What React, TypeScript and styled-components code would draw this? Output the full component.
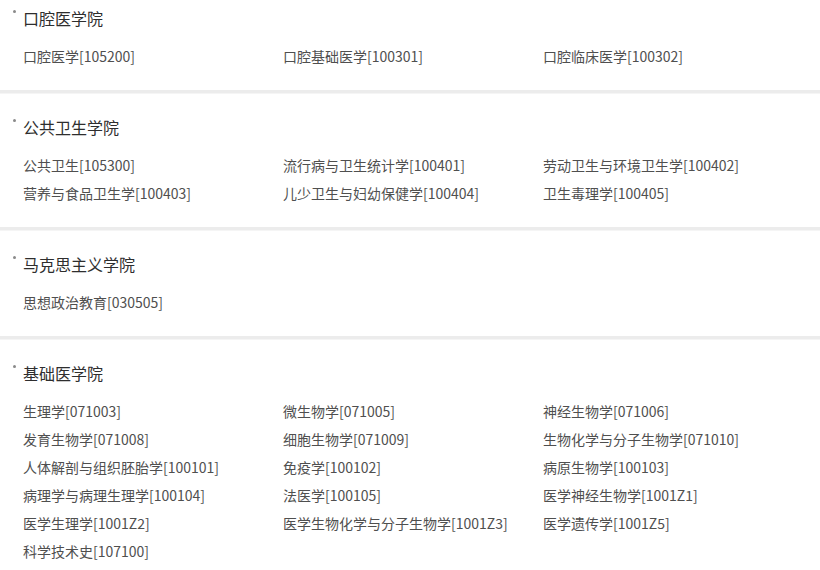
import React from 'react';
import styled, { createGlobalStyle } from 'styled-components';

const GlobalStyle = createGlobalStyle`
  html, body {
    margin: 0;
    padding: 0;
    background: #ffffff;
  }
  body {
    font-family: 'Noto Sans CJK SC', 'Noto Sans', sans-serif;
    -webkit-font-smoothing: antialiased;
  }
`;

const Page = styled.div`
  width: 820px;
  height: 570px;
  overflow: hidden;
  background: #fff;
`;

const Section = styled.section<{ $first?: boolean }>`
  padding: ${(p) => (p.$first ? '4px' : '20px')} 0 20px 0;
  border-bottom: 3px solid #ececec;
  box-shadow: 0 1px 0 #f5f5f5;
`;

const Title = styled.div`
  position: relative;
  padding-left: 23px;
  height: 28px;
  line-height: 28px;
  font-size: 16px;
  color: #2e2e2e;
  margin-bottom: 10px;

  &::before {
    content: '';
    position: absolute;
    left: 13px;
    top: 6px;
    width: 3px;
    height: 3px;
    border-radius: 50%;
    background: #8a8a8a;
  }
`;

const Grid = styled.div`
  display: grid;
  grid-template-columns: 260px 260px 260px;
  padding-left: 23px;
`;

const Item = styled.div`
  height: 28px;
  line-height: 28px;
  font-size: 14px;
  color: #4f4f4f;
  white-space: nowrap;
`;

const colleges: { name: string; majors: string[] }[] = [
  {
    name: '口腔医学院',
    majors: ['口腔医学[105200]', '口腔基础医学[100301]', '口腔临床医学[100302]'],
  },
  {
    name: '公共卫生学院',
    majors: [
      '公共卫生[105300]',
      '流行病与卫生统计学[100401]',
      '劳动卫生与环境卫生学[100402]',
      '营养与食品卫生学[100403]',
      '儿少卫生与妇幼保健学[100404]',
      '卫生毒理学[100405]',
    ],
  },
  {
    name: '马克思主义学院',
    majors: ['思想政治教育[030505]'],
  },
  {
    name: '基础医学院',
    majors: [
      '生理学[071003]',
      '微生物学[071005]',
      '神经生物学[071006]',
      '发育生物学[071008]',
      '细胞生物学[071009]',
      '生物化学与分子生物学[071010]',
      '人体解剖与组织胚胎学[100101]',
      '免疫学[100102]',
      '病原生物学[100103]',
      '病理学与病理生理学[100104]',
      '法医学[100105]',
      '医学神经生物学[1001Z1]',
      '医学生理学[1001Z2]',
      '医学生物化学与分子生物学[1001Z3]',
      '医学遗传学[1001Z5]',
      '科学技术史[107100]',
    ],
  },
];

const App = () => {
  return (
    <Page>
      <GlobalStyle />
      {colleges.map((c, i) => (
        <Section key={c.name} $first={i === 0}>
          <Title>{c.name}</Title>
          <Grid>
            {c.majors.map((m) => (
              <Item key={m}>{m}</Item>
            ))}
          </Grid>
        </Section>
      ))}
    </Page>
  );
};

export default App;
